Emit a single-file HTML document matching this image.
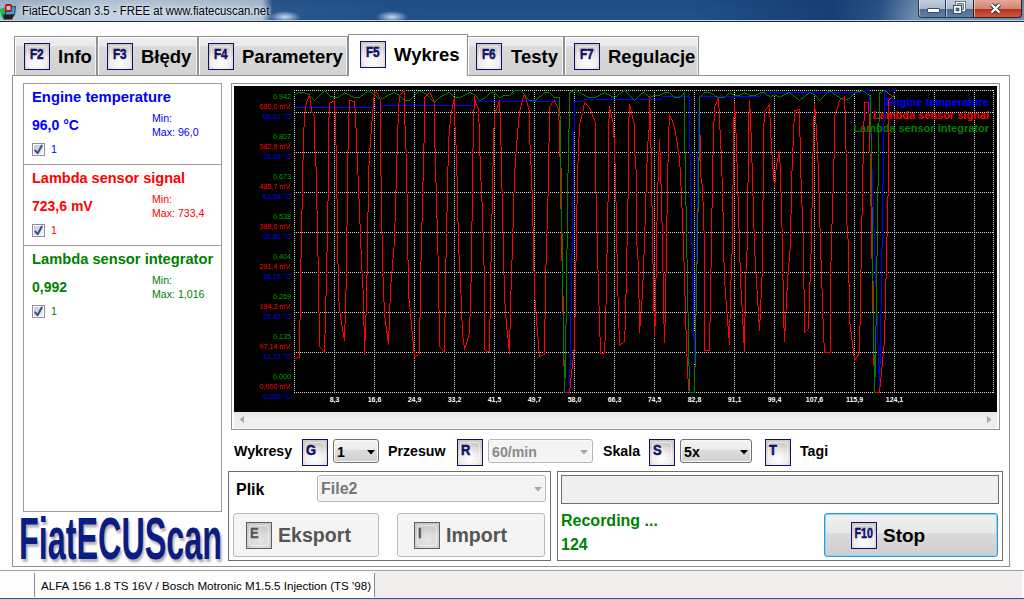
<!DOCTYPE html>
<html><head><meta charset="utf-8">
<style>
*{margin:0;padding:0;box-sizing:border-box}
html,body{width:1024px;height:600px;overflow:hidden;background:#fff;font-family:"Liberation Sans",sans-serif;position:relative}
.a{position:absolute}
#title{left:0;top:0;width:1024px;height:22px;background:radial-gradient(ellipse 16px 6px at 285px 17px,rgba(230,240,255,.85),rgba(230,240,255,0)),radial-gradient(ellipse 16px 6px at 392px 17px,rgba(230,240,255,.85),rgba(230,240,255,0)),linear-gradient(rgba(20,40,80,.12),rgba(255,255,255,0) 70%),linear-gradient(90deg,#aabcd2 0px,#c4d2e2 100px,#c0cedf 200px,#b4c6da 262px,#2a5890 272px,#1f5089 420px,#1f5089 700px,#173f76 830px,#2a5486 880px,#6e8db0 915px)}
#title .bl{left:0;top:20px;width:1024px;height:2px;background:linear-gradient(#c8d4e0 50%,#1c2b40 50%)}
#title .txt{left:21.5px;top:4.5px;font-size:12.3px;line-height:1;transform:scaleX(.923);transform-origin:0 0;color:#000;white-space:nowrap;text-shadow:0 0 6px #e8f0f8,0 0 3px #e8f0f8}
.tab{height:40px;border:1px solid #8f9294;background:linear-gradient(#f0f0f0 0%,#e8e8e8 24%,#dadada 26%,#d2d2d2 100%);box-shadow:inset 1px 1px 0 #fff,inset -1px 0 0 #f4f4f4}
.tab.sel{background:#fff;border-bottom:none;height:42px;z-index:2}
.tt{font-weight:bold;font-size:18.5px;color:#000;white-space:nowrap;line-height:1}
.key{border:1px solid #10106a;background:radial-gradient(ellipse 70% 60% at 50% 75%,#ffffff 0%,#f4f2f0 40%,#dedad6 80%,#cfcbc6 100%)}
.key:before{content:"";position:absolute;left:2px;top:2px;right:2px;bottom:2px;border-radius:3px;box-shadow:inset 0 0 1px 1px rgba(255,255,255,.6)}
.key span{position:absolute;left:-1.5px;right:0;text-align:center;top:3px;font-weight:bold;color:#10106a;line-height:1;transform:scaleX(.8);-webkit-text-stroke:0.5px #10106a}
.key.gray{border-color:#5e5e5e;background:radial-gradient(ellipse 70% 60% at 55% 70%,#e6e6e6 0%,#dadada 50%,#c8c8c8 100%)}
.key span.l1{text-align:left;left:3.3px;top:3px;transform-origin:0 0}
.key.gray span{color:#555;-webkit-text-stroke:0.3px #555}
.bx{border:1px solid #9a9ca0}
.sec{font-weight:bold;white-space:nowrap;line-height:1}
.mm{font-size:10.6px;white-space:nowrap;line-height:1}
.cb{width:13px;height:13px;border:1px solid #8e8f8f;background:#fff}.cb:before{content:"";position:absolute;left:1px;top:1px;width:9px;height:9px;background:linear-gradient(135deg,#c4cad8,#eef0f4)}
.lbl{font-weight:bold;font-size:14.2px;white-space:nowrap;line-height:1;color:#000}
.combo{border:1px solid #707070;border-radius:3px;background:linear-gradient(#f2f2f2 0%,#ebebeb 45%,#dddddd 47%,#d0d0d0 100%);box-shadow:inset 0 0 0 1px #fafafa}
.combo.dis{border-color:#b4b4b4;background:#f4f4f4}
.btn{border:1px solid #b8b8b8;border-radius:3px;background:#f4f4f4}

</style></head><body>
<div id="title" class="a">
  <div class="a bl"></div>
  <div class="a txt">FiatECUScan 3.5 - FREE at www.fiatecuscan.net</div>
  <svg class="a" style="left:0;top:2px" width="18" height="18" viewBox="0 0 18 18">
    <path d="M0,7 L6,5 L7,16 L4,18 L1,14 Z" fill="#1cb84a"/>
    <path d="M5.5,5 L15.5,4.5 L14.5,13 L5.5,13.5 Z" fill="#2aa8e8" stroke="#222" stroke-width="0.8"/>
    <path d="M3,12.5 L14.5,12.5 L12,17.5 L4,17.5 Z" fill="#241a1a"/>
    <rect x="5" y="2" width="7" height="8" rx="1.5" fill="#b01818"/>
    <rect x="6.5" y="4" width="4" height="4" fill="#e8b0b0"/>
  </svg>
  <div class="a" style="left:918px;top:0;width:28px;height:18px;border:1px solid #2a3a50;border-top:none;border-radius:0 0 0 4px;background:linear-gradient(#c2cfdd 0%,#a9bacd 50%,#4d6d92 52%,#5e7fa4 100%);box-shadow:inset 1px 0 0 rgba(255,255,255,.5)"></div>
  <div class="a" style="left:946px;top:0;width:27px;height:18px;border-bottom:1px solid #2a3a50;background:linear-gradient(#c2cfdd 0%,#a9bacd 50%,#4d6d92 52%,#5e7fa4 100%);box-shadow:inset 1px 0 0 rgba(255,255,255,.5)"></div>
  <div class="a" style="left:973px;top:0;width:49px;height:18px;border:1px solid #3a1a18;border-top:none;border-radius:0 0 4px 0;background:linear-gradient(#e0a89e 0%,#d58574 50%,#b7301c 52%,#c85a40 100%);box-shadow:inset 1px 0 0 rgba(255,255,255,.5)"></div>
  <div class="a" style="left:927px;top:8px;width:13px;height:5px;background:#fff;border:1px solid #3a4a60;border-radius:1px"></div>
  <svg class="a" style="left:952px;top:1px" width="14" height="14" viewBox="0 0 14 14">
    <rect x="4.5" y="1.5" width="8" height="8" fill="none" stroke="#3a4a60" stroke-width="3"/>
    <rect x="4.5" y="1.5" width="8" height="8" fill="none" stroke="#fff" stroke-width="1.5"/>
    <rect x="1.5" y="4.5" width="8" height="8" fill="#fff" stroke="#3a4a60" stroke-width="1"/>
    <rect x="4" y="7" width="3" height="3" fill="#4d6d92" stroke="#3a4a60" stroke-width="0.6"/>
  </svg>
  <svg class="a" style="left:989px;top:2px" width="13" height="13" viewBox="0 0 13 13">
    <path d="M2.5,2.5 L10.5,10.5 M10.5,2.5 L2.5,10.5" stroke="#3a2a2a" stroke-width="4.2"/>
    <path d="M2.5,2.5 L10.5,10.5 M10.5,2.5 L2.5,10.5" stroke="#fff" stroke-width="2.4"/>
  </svg>
</div>
<!-- tab page panel -->
<div class="a bx" style="left:12px;top:75px;width:998px;height:492px;border-color:#8d9196"></div>
<!-- tabs -->
<div class="a tab" style="left:14px;top:36px;width:83px"></div>
<div class="a tab" style="left:97px;top:36px;width:101px"></div>
<div class="a tab" style="left:198px;top:36px;width:150px"></div>
<div class="a tab sel" style="left:348px;top:34px;width:120px"></div>
<div class="a tab" style="left:467px;top:36px;width:97px"></div>
<div class="a tab" style="left:564px;top:36px;width:135px"></div>
<div class="a key" style="left:24px;top:43px;width:26px;height:27px"><span style="font-size:14px;transform:scaleX(0.84)">F2</span></div><div class="a tt" style="left:58px;top:48px">Info</div>
<div class="a key" style="left:107px;top:43px;width:26px;height:27px"><span style="font-size:14px;transform:scaleX(0.84)">F3</span></div><div class="a tt" style="left:141px;top:48px">Błędy</div>
<div class="a key" style="left:208px;top:43px;width:26px;height:27px"><span style="font-size:14px;transform:scaleX(0.84)">F4</span></div><div class="a tt" style="left:242px;top:48px">Parametery</div>
<div class="a" style="z-index:3"><div class="a key" style="left:360px;top:41px;width:26px;height:27px"><span style="font-size:14px;transform:scaleX(0.84)">F5</span></div><div class="a tt" style="left:394px;top:46px">Wykres</div></div>
<div class="a key" style="left:476px;top:43px;width:26px;height:27px"><span style="font-size:14px;transform:scaleX(0.84)">F6</span></div><div class="a tt" style="left:511px;top:48px">Testy</div>
<div class="a key" style="left:574px;top:43px;width:26px;height:27px"><span style="font-size:14px;transform:scaleX(0.84)">F7</span></div><div class="a tt" style="left:608px;top:48px">Regulacje</div>

<!-- info box -->
<div class="a bx" style="left:23px;top:83px;width:199px;height:429px"></div>
<div class="a" style="left:24px;top:164px;width:197px;height:1px;background:#a0a0a0"></div>
<div class="a" style="left:24px;top:245px;width:197px;height:1px;background:#a0a0a0"></div>

<div class="a sec" style="left:32px;top:90px;font-size:14.8px;color:#0000ff">Engine temperature</div>
<div class="a sec" style="left:32px;top:118px;font-size:14px;color:#0000ff">96,0 °C</div>
<div class="a mm" style="left:152px;top:113px;color:#0000ff">Min:</div>
<div class="a mm" style="left:152px;top:127px;color:#0000ff">Max: 96,0</div>
<div class="a cb" style="left:32px;top:143px"></div><svg class="a" style="left:32px;top:143px" width="13" height="13" viewBox="0 0 13 13"><path d="M3.2,7.4 L5.6,10.2 L9.8,2.6" fill="none" stroke="#3a4c94" stroke-width="2" stroke-linecap="round" stroke-linejoin="round"/></svg>
<div class="a mm" style="left:51px;top:144px;color:#0000ff">1</div>

<div class="a sec" style="left:32px;top:171px;font-size:14.5px;color:#ff0000">Lambda sensor signal</div>
<div class="a sec" style="left:32px;top:199px;font-size:14px;color:#ff0000">723,6 mV</div>
<div class="a mm" style="left:152px;top:194px;color:#ff0000">Min:</div>
<div class="a mm" style="left:152px;top:208px;color:#ff0000">Max: 733,4</div>
<div class="a cb" style="left:32px;top:224px"></div><svg class="a" style="left:32px;top:224px" width="13" height="13" viewBox="0 0 13 13"><path d="M3.2,7.4 L5.6,10.2 L9.8,2.6" fill="none" stroke="#3a4c94" stroke-width="2" stroke-linecap="round" stroke-linejoin="round"/></svg>
<div class="a mm" style="left:51px;top:225px;color:#ff0000">1</div>

<div class="a sec" style="left:32px;top:252px;font-size:14.7px;color:#008000">Lambda sensor integrator</div>
<div class="a sec" style="left:32px;top:280px;font-size:14px;color:#008000">0,992</div>
<div class="a mm" style="left:152px;top:275px;color:#008000">Min:</div>
<div class="a mm" style="left:152px;top:289px;color:#008000">Max: 1,016</div>
<div class="a cb" style="left:32px;top:305px"></div><svg class="a" style="left:32px;top:305px" width="13" height="13" viewBox="0 0 13 13"><path d="M3.2,7.4 L5.6,10.2 L9.8,2.6" fill="none" stroke="#3a4c94" stroke-width="2" stroke-linecap="round" stroke-linejoin="round"/></svg>
<div class="a mm" style="left:51px;top:306px;color:#008000">1</div>

<!-- logo -->
<div class="a" style="left:19px;top:509.5px;font-weight:bold;font-size:59px;color:#0b1c82;transform:scaleX(0.548);transform-origin:0 0;line-height:1;white-space:nowrap;text-shadow:3px 3px 3px rgba(0,0,0,.3)">FiatECUScan</div>

<svg class="a" style="left:0;top:0" width="1024" height="600" viewBox="0 0 1024 600">
<rect x="231.5" y="83.5" width="768" height="346" fill="#fff" stroke="#8e9196" stroke-width="1"/>
<rect x="234" y="86" width="763" height="326" fill="#000"/>
<rect x="234" y="412" width="763" height="16" fill="url(#sb)"/>
<path d="M244,416 L239.5,419.5 L244,423 Z" fill="#a8a8a8"/>
<path d="M987,416 L991.5,419.5 L987,423 Z" fill="#a8a8a8"/>
<path d="M294,90.5H994 M294,112.5H994 M294,152.5H994 M294,192.5H994 M294,232.5H994 M294,272.5H994 M294,312.5H994 M294,352.5H994 M294,392.5H994 M294.5,90V393 M334.5,90V393 M374.5,90V393 M414.5,90V393 M454.5,90V393 M494.5,90V393 M534.5,90V393 M574.5,90V393 M614.5,90V393 M654.5,90V393 M694.5,90V393 M734.5,90V393 M774.5,90V393 M814.5,90V393 M854.5,90V393 M894.5,90V393 M934.5,90V393 M974.5,90V393 M993.5,90V393" stroke="#d8d8d8" stroke-width="1" stroke-dasharray="1,1" fill="none" shape-rendering="crispEdges"/>
<g font-size="7.2" text-anchor="end" font-family="Liberation Sans">
<text x="291" y="379.0" fill="#00a000">0,000</text>
<text x="290" y="389.0" fill="#ff0000">0,000 mV</text>
<text x="291" y="399.3" fill="#0000ff">0,000 °C</text>
<text x="291" y="339.0" fill="#00a000">0,135</text>
<text x="290" y="349.0" fill="#ff0000">97,14 mV</text>
<text x="291" y="359.3" fill="#0000ff">12,72 °C</text>
<text x="291" y="299.0" fill="#00a000">0,269</text>
<text x="290" y="309.0" fill="#ff0000">194,3 mV</text>
<text x="291" y="319.3" fill="#0000ff">25,43 °C</text>
<text x="291" y="259.0" fill="#00a000">0,404</text>
<text x="290" y="269.0" fill="#ff0000">291,4 mV</text>
<text x="291" y="279.3" fill="#0000ff">38,15 °C</text>
<text x="291" y="219.0" fill="#00a000">0,538</text>
<text x="290" y="229.0" fill="#ff0000">388,6 mV</text>
<text x="291" y="239.3" fill="#0000ff">50,86 °C</text>
<text x="291" y="179.0" fill="#00a000">0,673</text>
<text x="290" y="189.0" fill="#ff0000">485,7 mV</text>
<text x="291" y="199.3" fill="#0000ff">63,58 °C</text>
<text x="291" y="139.0" fill="#00a000">0,807</text>
<text x="290" y="149.0" fill="#ff0000">582,8 mV</text>
<text x="291" y="159.3" fill="#0000ff">76,29 °C</text>
<text x="291" y="99.0" fill="#00a000">0,942</text>
<text x="290" y="109.0" fill="#ff0000">680,0 mV</text>
<text x="291" y="119.3" fill="#0000ff">89,01 °C</text>
</g>
<g font-size="7" font-weight="bold" text-anchor="middle" fill="#fff" font-family="Liberation Sans">
<text x="334.5" y="402.3">8,3</text>
<text x="374.5" y="402.3">16,6</text>
<text x="414.5" y="402.3">24,9</text>
<text x="454.5" y="402.3">33,2</text>
<text x="494.5" y="402.3">41,5</text>
<text x="534.5" y="402.3">49,7</text>
<text x="574.5" y="402.3">58,0</text>
<text x="614.5" y="402.3">66,3</text>
<text x="654.5" y="402.3">74,5</text>
<text x="694.5" y="402.3">82,8</text>
<text x="734.5" y="402.3">91,1</text>
<text x="774.5" y="402.3">99,4</text>
<text x="814.5" y="402.3">107,6</text>
<text x="854.5" y="402.3">115,9</text>
<text x="894.5" y="402.3">124,1</text>
</g>
<g font-size="11" font-weight="bold" text-anchor="end" font-family="Liberation Sans"><text x="989" y="105.5" fill="#0000ff">Engine temperature</text><text x="989" y="118.5" fill="#ff0000">Lambda sensor signal</text><text x="989" y="131.5" fill="#008000">Lambda sensor integrator</text></g>
<path fill="#0000ff" shape-rendering="crispEdges" d="M294 107h1v1h-1zM295 107h1v1h-1zM296 107h1v1h-1zM297 107h1v1h-1zM298 107h1v1h-1zM299 107h1v1h-1zM300 107h1v1h-1zM301 107h1v1h-1zM302 107h1v1h-1zM303 107h1v1h-1zM304 107h1v1h-1zM306 107h1v1h-1zM307 107h1v1h-1zM308 107h1v1h-1zM309 107h1v1h-1zM310 107h1v1h-1zM312 107h1v1h-1zM313 107h1v1h-1zM314 107h1v1h-1zM315 107h1v1h-1zM316 107h1v1h-1zM317 107h1v1h-1zM318 107h1v1h-1zM319 107h1v1h-1zM320 107h1v1h-1zM321 107h1v1h-1zM322 107h1v1h-1zM323 107h1v1h-1zM324 107h1v1h-1zM325 107h1v1h-1zM326 107h1v1h-1zM327 107h1v1h-1zM328 107h1v1h-1zM330 107h1v1h-1zM331 107h1v1h-1zM332 107h1v1h-1zM333 107h1v1h-1zM335 107h1v1h-1zM336 107h1v1h-1zM337 107h1v1h-1zM338 107h1v1h-1zM339 107h1v1h-1zM340 107h1v1h-1zM341 107h1v1h-1zM342 107h1v1h-1zM343 107h1v1h-1zM344 107h1v1h-1zM345 107h1v1h-1zM346 107h1v1h-1zM347 107h1v1h-1zM348 107h1v1h-1zM350 107h1v1h-1zM351 107h1v1h-1zM352 107h1v1h-1zM353 107h1v1h-1zM355 107h1v1h-1zM356 107h1v1h-1zM357 107h1v1h-1zM358 107h1v1h-1zM359 107h1v1h-1zM360 107h1v1h-1zM361 107h1v1h-1zM362 107h1v1h-1zM363 107h1v1h-1zM364 107h1v1h-1zM365 107h1v1h-1zM366 107h1v1h-1zM367 107h1v1h-1zM368 107h1v1h-1zM369 107h1v1h-1zM370 107h1v1h-1zM371 107h1v1h-1zM372 106h1v1h-1zM374 105h1v1h-1zM375 106h1v1h-1zM376 106h1v1h-1zM377 107h1v1h-1zM378 107h1v1h-1zM379 108h1v1h-1zM381 106h1v1h-1zM382 106h1v1h-1zM383 105h1v1h-1zM384 105h1v1h-1zM385 105h1v1h-1zM386 105h1v1h-1zM387 105h1v1h-1zM388 105h1v1h-1zM389 105h1v1h-1zM390 105h1v1h-1zM391 105h1v1h-1zM392 105h1v1h-1zM393 105h1v1h-1zM394 105h1v1h-1zM395 105h1v1h-1zM396 105h1v1h-1zM397 105h1v1h-1zM399 105h1v1h-1zM400 105h1v1h-1zM401 105h1v1h-1zM402 105h1v1h-1zM403 105h1v1h-1zM405 105h1v1h-1zM406 105h1v1h-1zM407 105h1v1h-1zM408 105h1v1h-1zM409 105h1v1h-1zM410 105h1v1h-1zM411 105h1v1h-1zM412 105h1v1h-1zM413 105h1v1h-1zM414 105h1v1h-1zM415 105h1v1h-1zM416 105h1v1h-1zM417 105h1v1h-1zM418 105h1v1h-1zM419 105h1v1h-1zM420 105h1v1h-1zM421 105h1v1h-1zM422 105h1v1h-1zM423 105h1v1h-1zM425 105h1v1h-1zM426 105h1v1h-1zM427 105h1v1h-1zM428 105h1v1h-1zM429 105h1v1h-1zM430 105h1v1h-1zM431 105h1v1h-1zM432 105h1v1h-1zM433 105h1v1h-1zM435 105h1v1h-1zM436 105h1v1h-1zM437 105h1v1h-1zM438 105h1v1h-1zM439 105h1v1h-1zM440 105h1v1h-1zM441 105h1v1h-1zM442 105h1v1h-1zM443 105h1v1h-1zM444 105h1v1h-1zM445 105h1v1h-1zM446 105h1v1h-1zM447 105h1v1h-1zM448 105h1v1h-1zM449 105h1v1h-1zM450 105h1v1h-1zM451 105h1v1h-1zM453 105h1v1h-1zM455 105h1v1h-1zM456 105h1v1h-1zM457 105h1v1h-1zM458 105h1v1h-1zM459 105h1v1h-1zM460 105h1v1h-1zM461 105h1v1h-1zM462 105h1v1h-1zM463 105h1v1h-1zM464 105h1v1h-1zM465 105h1v1h-1zM466 105h1v1h-1zM467 105h1v1h-1zM468 105h1v1h-1zM469 105h1v1h-1zM470 105h1v1h-1zM471 105h1v1h-1zM472 105h1v1h-1zM473 105h1v1h-1zM475 104h1v1h-1zM476 103h1v1h-1zM477 102h1v1h-1zM478 101h1v1h-1zM479 101h1v1h-1zM480 101h1v1h-1zM481 101h1v1h-1zM482 101h1v1h-1zM483 101h1v1h-1zM484 101h1v1h-1zM485 101h1v1h-1zM486 101h1v1h-1zM487 101h1v1h-1zM488 101h1v1h-1zM489 101h1v1h-1zM490 101h1v1h-1zM491 101h1v1h-1zM492 101h1v1h-1zM493 101h1v1h-1zM494 101h1v1h-1zM495 101h1v1h-1zM496 101h1v1h-1zM497 101h1v1h-1zM498 101h1v1h-1zM500 101h1v1h-1zM501 101h1v1h-1zM502 101h1v1h-1zM503 101h1v1h-1zM504 101h1v1h-1zM505 101h1v1h-1zM506 101h1v1h-1zM507 101h1v1h-1zM508 101h1v1h-1zM509 101h1v1h-1zM510 101h1v1h-1zM511 101h1v1h-1zM512 101h1v1h-1zM513 101h1v1h-1zM514 101h1v1h-1zM515 101h1v1h-1zM516 101h1v1h-1zM517 101h1v1h-1zM518 101h1v1h-1zM519 101h1v1h-1zM520 101h1v1h-1zM521 101h1v1h-1zM523 101h1v1h-1zM524 101h1v1h-1zM525 101h1v1h-1zM527 101h1v1h-1zM528 101h1v1h-1zM529 101h1v1h-1zM530 101h1v1h-1zM531 101h1v1h-1zM532 101h1v1h-1zM533 101h1v1h-1zM534 101h1v1h-1zM535 101h1v1h-1zM536 101h1v1h-1zM537 101h1v1h-1zM538 101h1v1h-1zM539 101h1v1h-1zM540 101h1v1h-1zM541 101h1v1h-1zM542 101h1v1h-1zM543 101h1v1h-1zM544 101h1v1h-1zM545 101h1v1h-1zM546 101h1v1h-1zM547 101h1v1h-1zM548 101h1v1h-1zM549 101h1v1h-1zM550 101h1v1h-1zM551 101h1v1h-1zM552 101h1v1h-1zM555 101h1v1h-1zM556 101h1v1h-1zM557 101h1v1h-1zM558 101h1v1h-1zM559 116h1v2h-1zM565 391h1v1h-1zM566 390h1v1h-1zM567 390h1v1h-1zM568 389h1v1h-1zM569 367h1v21h-1zM570 315h1v52h-1zM571 254h1v61h-1zM572 193h1v61h-1zM573 132h1v61h-1zM574 101h1v31h-1zM575 101h1v1h-1zM576 101h1v1h-1zM577 101h1v1h-1zM578 101h1v1h-1zM579 101h1v1h-1zM580 101h1v1h-1zM581 101h1v1h-1zM582 100h1v1h-1zM583 100h1v1h-1zM584 99h1v1h-1zM585 99h1v1h-1zM586 99h1v1h-1zM587 99h1v1h-1zM588 99h1v1h-1zM589 99h1v1h-1zM590 99h1v1h-1zM591 99h1v1h-1zM592 99h1v1h-1zM593 99h1v1h-1zM594 99h1v1h-1zM595 99h1v1h-1zM596 99h1v1h-1zM597 99h1v1h-1zM598 99h1v1h-1zM599 99h1v1h-1zM600 99h1v1h-1zM601 99h1v1h-1zM602 99h1v1h-1zM603 99h1v1h-1zM604 99h1v1h-1zM605 99h1v1h-1zM606 99h1v1h-1zM607 99h1v1h-1zM608 99h1v1h-1zM609 99h1v1h-1zM610 99h1v1h-1zM611 99h1v1h-1zM612 99h1v1h-1zM613 99h1v1h-1zM614 99h1v1h-1zM615 99h1v1h-1zM616 99h1v1h-1zM617 99h1v1h-1zM618 99h1v1h-1zM619 99h1v1h-1zM620 99h1v1h-1zM621 99h1v1h-1zM622 99h1v1h-1zM623 99h1v1h-1zM624 99h1v1h-1zM625 99h1v1h-1zM626 99h1v1h-1zM627 99h1v1h-1zM628 99h1v1h-1zM629 99h1v1h-1zM630 99h1v1h-1zM631 99h1v1h-1zM632 99h1v1h-1zM634 99h1v1h-1zM636 99h1v1h-1zM637 99h1v1h-1zM638 99h1v1h-1zM639 99h1v1h-1zM640 99h1v1h-1zM641 99h1v1h-1zM642 99h1v1h-1zM643 99h1v1h-1zM644 99h1v1h-1zM645 99h1v1h-1zM646 99h1v1h-1zM647 99h1v1h-1zM648 99h1v1h-1zM650 99h1v1h-1zM651 99h1v1h-1zM652 99h1v1h-1zM653 99h1v1h-1zM654 99h1v1h-1zM655 99h1v1h-1zM656 99h1v1h-1zM657 99h1v1h-1zM658 99h1v1h-1zM659 99h1v1h-1zM660 99h1v1h-1zM661 98h1v1h-1zM662 97h1v1h-1zM663 96h1v1h-1zM664 96h1v1h-1zM665 96h1v1h-1zM666 96h1v1h-1zM667 96h1v1h-1zM668 96h1v1h-1zM669 96h1v1h-1zM670 96h1v1h-1zM671 96h1v1h-1zM672 96h1v1h-1zM674 96h1v1h-1zM675 96h1v1h-1zM676 96h1v1h-1zM677 96h1v1h-1zM678 96h1v1h-1zM679 96h1v1h-1zM681 96h1v1h-1zM682 96h1v1h-1zM683 96h1v1h-1zM685 96h1v1h-1zM686 96h1v1h-1zM687 96h1v1h-1zM688 96h1v1h-1zM689 96h1v53h-1zM690 149h1v48h-1zM691 197h1v47h-1zM692 244h1v47h-1zM693 291h1v48h-1zM694 332h1v31h-1zM695 272h1v42h-1zM696 212h1v50h-1zM697 152h1v57h-1zM698 109h1v43h-1zM699 96h1v1h-1zM701 96h1v1h-1zM702 96h1v1h-1zM703 96h1v1h-1zM704 96h1v1h-1zM705 96h1v1h-1zM706 96h1v1h-1zM707 96h1v1h-1zM708 96h1v1h-1zM709 96h1v1h-1zM710 96h1v1h-1zM711 96h1v1h-1zM712 96h1v1h-1zM713 96h1v1h-1zM714 96h1v1h-1zM717 96h1v1h-1zM718 96h1v1h-1zM719 96h1v1h-1zM720 96h1v1h-1zM721 96h1v1h-1zM722 96h1v1h-1zM723 96h1v1h-1zM724 96h1v1h-1zM726 96h1v1h-1zM727 96h1v1h-1zM728 96h1v1h-1zM729 96h1v1h-1zM730 96h1v1h-1zM731 96h1v1h-1zM732 96h1v1h-1zM733 96h1v1h-1zM734 96h1v1h-1zM735 96h1v1h-1zM736 96h1v1h-1zM737 96h1v1h-1zM738 96h1v1h-1zM739 96h1v1h-1zM740 96h1v1h-1zM741 96h1v1h-1zM742 96h1v1h-1zM743 96h1v1h-1zM744 96h1v1h-1zM745 96h1v1h-1zM746 96h1v1h-1zM747 96h1v1h-1zM748 96h1v1h-1zM749 96h1v1h-1zM750 96h1v1h-1zM751 96h1v1h-1zM752 96h1v1h-1zM753 96h1v1h-1zM754 96h1v1h-1zM755 96h1v1h-1zM756 96h1v1h-1zM757 96h1v1h-1zM758 96h1v1h-1zM759 96h1v1h-1zM760 95h1v1h-1zM761 94h1v1h-1zM762 93h1v1h-1zM765 92h1v1h-1zM766 92h1v1h-1zM767 92h1v1h-1zM768 92h1v1h-1zM769 92h1v1h-1zM770 92h1v1h-1zM771 92h1v1h-1zM772 92h1v1h-1zM773 92h1v1h-1zM774 92h1v1h-1zM775 92h1v1h-1zM776 92h1v1h-1zM777 92h1v1h-1zM778 92h1v1h-1zM779 92h1v1h-1zM780 92h1v1h-1zM781 92h1v1h-1zM782 92h1v1h-1zM783 92h1v1h-1zM784 92h1v1h-1zM785 92h1v1h-1zM786 92h1v1h-1zM787 92h1v1h-1zM790 92h1v1h-1zM791 92h1v1h-1zM792 92h1v1h-1zM793 92h1v1h-1zM794 92h1v1h-1zM795 92h1v1h-1zM796 92h1v1h-1zM797 92h1v1h-1zM798 92h1v1h-1zM799 92h1v1h-1zM800 92h1v1h-1zM801 92h1v1h-1zM802 92h1v1h-1zM803 92h1v1h-1zM804 92h1v1h-1zM805 92h1v1h-1zM806 92h1v1h-1zM807 92h1v1h-1zM808 92h1v1h-1zM811 92h1v1h-1zM812 92h1v1h-1zM813 92h1v1h-1zM814 92h1v1h-1zM815 92h1v1h-1zM816 92h1v1h-1zM817 92h1v1h-1zM818 92h1v1h-1zM819 92h1v1h-1zM820 92h1v1h-1zM821 92h1v1h-1zM822 92h1v1h-1zM823 92h1v1h-1zM824 92h1v1h-1zM825 92h1v1h-1zM826 92h1v1h-1zM828 92h1v1h-1zM829 92h1v1h-1zM830 92h1v1h-1zM831 92h1v1h-1zM833 92h1v1h-1zM834 92h1v1h-1zM835 92h1v1h-1zM836 92h1v1h-1zM837 92h1v1h-1zM838 92h1v1h-1zM839 92h1v1h-1zM840 92h1v1h-1zM841 92h1v1h-1zM842 92h1v1h-1zM843 92h1v1h-1zM844 92h1v1h-1zM845 92h1v1h-1zM846 92h1v1h-1zM847 92h1v1h-1zM848 92h1v1h-1zM849 92h1v1h-1zM850 92h1v1h-1zM851 92h1v1h-1zM852 92h1v1h-1zM853 92h1v1h-1zM854 92h1v1h-1zM857 92h1v1h-1zM858 92h1v1h-1zM859 92h1v1h-1zM860 92h1v1h-1zM861 91h1v1h-1zM863 90h1v1h-1zM864 90h1v1h-1zM865 90h1v1h-1zM866 90h1v1h-1zM867 90h1v1h-1zM868 90h1v1h-1zM869 90h1v5h-1zM869 96h1v14h-1zM870 133h1v7h-1zM872 169h1v30h-1zM873 199h1v29h-1zM874 228h1v29h-1zM875 257h1v29h-1zM877 315h1v30h-1zM878 345h1v29h-1zM879 365h1v22h-1zM880 309h1v56h-1zM881 247h1v62h-1zM882 184h1v63h-1zM883 122h1v62h-1zM884 91h1v31h-1zM885 90h1v1h-1zM886 90h1v1h-1zM887 90h1v1h-1zM888 90h1v1h-1zM889 90h1v1h-1zM890 90h1v1h-1zM891 90h1v1h-1zM892 90h1v1h-1zM893 90h1v1h-1zM894 90h1v1h-1zM895 90h1v1h-1z"/>
<path fill="#ff0000" shape-rendering="crispEdges" d="M294 358h1v1h-1zM295 358h1v1h-1zM296 358h1v1h-1zM297 357h1v1h-1zM298 357h1v1h-1zM299 320h1v38h-1zM300 258h1v62h-1zM301 210h1v48h-1zM302 160h1v50h-1zM303 127h1v33h-1zM304 113h1v14h-1zM305 105h1v8h-1zM306 101h1v4h-1zM307 99h1v2h-1zM308 96h1v3h-1zM309 94h1v1h-1zM309 96h1v2h-1zM310 98h1v8h-1zM311 106h1v6h-1zM312 112h1v2h-1zM313 114h1v2h-1zM314 116h1v35h-1zM315 151h1v16h-1zM316 167h1v43h-1zM317 210h1v47h-1zM318 257h1v56h-1zM319 313h1v34h-1zM320 347h1v1h-1zM321 348h1v1h-1zM322 349h1v2h-1zM323 351h1v1h-1zM324 334h1v19h-1zM325 296h1v38h-1zM326 252h1v44h-1zM327 201h1v51h-1zM328 117h1v84h-1zM329 103h1v14h-1zM330 102h1v1h-1zM331 102h1v1h-1zM332 101h1v1h-1zM333 101h1v1h-1zM334 100h1v12h-1zM335 112h1v33h-1zM336 145h1v54h-1zM337 199h1v65h-1zM338 264h1v38h-1zM339 302h1v10h-1zM340 312h1v8h-1zM341 320h1v6h-1zM342 326h1v6h-1zM343 332h1v6h-1zM344 324h1v17h-1zM345 291h1v33h-1zM346 225h1v66h-1zM347 150h1v75h-1zM348 113h1v37h-1zM349 100h1v13h-1zM350 100h1v1h-1zM351 100h1v1h-1zM352 101h1v1h-1zM353 101h1v1h-1zM354 101h1v7h-1zM355 108h1v20h-1zM356 128h1v24h-1zM357 152h1v23h-1zM358 175h1v24h-1zM359 199h1v25h-1zM360 224h1v25h-1zM361 249h1v22h-1zM362 271h1v18h-1zM363 289h1v37h-1zM364 326h1v29h-1zM365 315h1v26h-1zM366 275h1v40h-1zM367 212h1v63h-1zM368 165h1v47h-1zM369 148h1v17h-1zM370 134h1v14h-1zM371 121h1v13h-1zM372 109h1v12h-1zM373 97h1v12h-1zM374 91h1v4h-1zM374 96h1v1h-1zM375 92h1v1h-1zM376 92h1v1h-1zM377 93h1v2h-1zM378 95h1v2h-1zM379 97h1v1h-1zM380 100h1v76h-1zM381 176h1v59h-1zM382 235h1v42h-1zM383 277h1v25h-1zM384 302h1v16h-1zM385 318h1v8h-1zM386 326h1v7h-1zM387 333h1v8h-1zM388 331h1v14h-1zM389 303h1v28h-1zM390 283h1v20h-1zM391 271h1v12h-1zM392 259h1v12h-1zM393 247h1v12h-1zM394 223h1v24h-1zM395 189h1v34h-1zM396 155h1v34h-1zM397 124h1v31h-1zM398 103h1v21h-1zM399 96h1v7h-1zM400 94h1v1h-1zM401 93h1v1h-1zM402 92h1v1h-1zM403 91h1v1h-1zM404 90h1v10h-1zM404 101h1v24h-1zM405 125h1v24h-1zM406 149h1v45h-1zM407 194h1v66h-1zM408 260h1v39h-1zM409 299h1v10h-1zM410 309h1v11h-1zM411 320h1v11h-1zM412 331h1v10h-1zM413 341h1v11h-1zM414 352h1v6h-1zM415 356h1v1h-1zM416 355h1v1h-1zM417 355h1v1h-1zM418 354h1v1h-1zM419 317h1v37h-1zM420 261h1v56h-1zM421 222h1v39h-1zM422 182h1v40h-1zM423 143h1v39h-1zM424 97h1v46h-1zM425 96h1v1h-1zM426 95h1v1h-1zM427 94h1v1h-1zM428 93h1v1h-1zM429 92h1v1h-1zM430 93h1v2h-1zM431 95h1v2h-1zM432 97h1v2h-1zM433 99h1v2h-1zM434 101h1v1h-1zM434 103h1v45h-1zM435 148h1v35h-1zM436 183h1v36h-1zM437 219h1v36h-1zM438 255h1v54h-1zM439 309h1v38h-1zM440 347h1v1h-1zM441 348h1v1h-1zM442 349h1v2h-1zM443 351h1v1h-1zM444 317h1v36h-1zM445 258h1v59h-1zM446 212h1v46h-1zM447 166h1v46h-1zM448 136h1v30h-1zM449 124h1v12h-1zM450 115h1v9h-1zM451 109h1v6h-1zM452 104h1v5h-1zM453 100h1v4h-1zM454 98h1v29h-1zM455 127h1v18h-1zM456 145h1v31h-1zM457 176h1v46h-1zM458 222h1v33h-1zM459 255h1v18h-1zM460 273h1v22h-1zM461 295h1v26h-1zM462 321h1v16h-1zM463 337h1v8h-1zM464 345h1v5h-1zM465 345h1v3h-1zM466 342h1v3h-1zM467 338h1v4h-1zM468 335h1v3h-1zM469 317h1v18h-1zM470 283h1v34h-1zM471 221h1v62h-1zM472 148h1v73h-1zM473 109h1v39h-1zM474 96h1v13h-1zM475 100h1v4h-1zM476 104h1v2h-1zM477 106h1v2h-1zM478 108h1v15h-1zM479 123h1v33h-1zM480 156h1v25h-1zM481 181h1v21h-1zM482 202h1v31h-1zM483 233h1v32h-1zM484 265h1v85h-1zM485 350h1v1h-1zM486 350h1v1h-1zM487 351h1v1h-1zM488 351h1v1h-1zM489 319h1v34h-1zM490 262h1v57h-1zM491 214h1v48h-1zM492 166h1v48h-1zM493 128h1v38h-1zM494 113h1v15h-1zM495 110h1v3h-1zM496 108h1v2h-1zM497 105h1v3h-1zM498 102h1v3h-1zM499 100h1v13h-1zM500 113h1v33h-1zM501 146h1v43h-1zM502 189h1v43h-1zM503 232h1v43h-1zM504 275h1v29h-1zM505 304h1v14h-1zM506 318h1v12h-1zM507 330h1v9h-1zM508 339h1v10h-1zM509 329h1v25h-1zM510 290h1v39h-1zM511 260h1v30h-1zM512 228h1v32h-1zM513 193h1v35h-1zM514 168h1v25h-1zM515 154h1v14h-1zM516 140h1v14h-1zM517 128h1v12h-1zM518 117h1v11h-1zM519 110h1v7h-1zM520 106h1v4h-1zM521 102h1v4h-1zM522 98h1v4h-1zM523 95h1v3h-1zM524 95h1v1h-1zM525 97h1v2h-1zM526 99h1v3h-1zM527 102h1v4h-1zM528 106h1v4h-1zM529 110h1v35h-1zM530 145h1v20h-1zM531 165h1v25h-1zM532 190h1v37h-1zM533 227h1v44h-1zM534 271h1v29h-1zM535 300h1v13h-1zM536 313h1v14h-1zM537 327h1v12h-1zM538 339h1v12h-1zM539 351h1v6h-1zM540 356h1v1h-1zM541 355h1v1h-1zM542 355h1v1h-1zM543 354h1v1h-1zM544 319h1v36h-1zM545 265h1v54h-1zM546 231h1v34h-1zM547 196h1v35h-1zM548 143h1v53h-1zM549 106h1v37h-1zM550 105h1v1h-1zM551 103h1v2h-1zM552 102h1v1h-1zM553 101h1v1h-1zM554 100h1v2h-1zM555 102h1v2h-1zM556 104h1v2h-1zM557 106h1v2h-1zM558 108h1v12h-1zM559 120h1v37h-1zM560 168h1v41h-1zM561 232h1v29h-1zM562 296h1v18h-1zM563 360h1v6h-1zM565 392h1v1h-1zM566 392h1v1h-1zM567 392h1v1h-1zM568 392h1v1h-1zM569 388h1v5h-1zM570 378h1v10h-1zM571 369h1v9h-1zM572 360h1v9h-1zM573 350h1v10h-1zM574 317h1v33h-1zM575 261h1v56h-1zM576 204h1v57h-1zM577 163h1v41h-1zM578 137h1v26h-1zM579 123h1v14h-1zM580 119h1v4h-1zM581 115h1v4h-1zM582 111h1v4h-1zM583 105h1v6h-1zM584 102h1v3h-1zM585 103h1v1h-1zM586 104h1v1h-1zM587 105h1v1h-1zM588 106h1v1h-1zM589 107h1v2h-1zM590 109h1v2h-1zM591 111h1v3h-1zM592 114h1v3h-1zM593 117h1v2h-1zM594 119h1v2h-1zM595 121h1v73h-1zM596 194h1v38h-1zM597 232h1v38h-1zM598 270h1v35h-1zM599 305h1v32h-1zM600 337h1v17h-1zM601 353h1v1h-1zM602 353h1v1h-1zM603 353h1v1h-1zM604 341h1v13h-1zM605 305h1v36h-1zM606 254h1v51h-1zM607 202h1v52h-1zM608 119h1v83h-1zM609 106h1v13h-1zM610 109h1v5h-1zM611 114h1v4h-1zM612 118h1v4h-1zM613 122h1v16h-1zM614 138h1v25h-1zM615 163h1v39h-1zM616 202h1v52h-1zM617 254h1v43h-1zM618 297h1v32h-1zM619 329h1v17h-1zM620 344h1v1h-1zM621 343h1v1h-1zM622 343h1v1h-1zM623 342h1v1h-1zM624 330h1v12h-1zM625 294h1v36h-1zM626 247h1v47h-1zM627 199h1v48h-1zM628 117h1v82h-1zM629 104h1v13h-1zM630 106h1v4h-1zM631 110h1v5h-1zM632 115h1v4h-1zM633 119h1v4h-1zM634 123h1v33h-1zM635 156h1v13h-1zM636 169h1v78h-1zM637 247h1v13h-1zM638 260h1v39h-1zM639 299h1v34h-1zM640 313h1v13h-1zM641 300h1v13h-1zM642 280h1v20h-1zM643 254h1v26h-1zM644 225h1v29h-1zM645 194h1v31h-1zM646 163h1v31h-1zM647 141h1v22h-1zM648 130h1v11h-1zM649 96h1v1h-1zM649 98h1v32h-1zM650 110h1v38h-1zM651 148h1v58h-1zM652 206h1v58h-1zM653 264h1v48h-1zM654 312h1v25h-1zM655 278h1v48h-1zM656 221h1v57h-1zM657 182h1v39h-1zM658 151h1v31h-1zM659 139h1v13h-1zM660 152h1v32h-1zM661 184h1v38h-1zM662 222h1v51h-1zM663 273h1v51h-1zM664 324h1v19h-1zM665 274h1v51h-1zM666 215h1v59h-1zM667 163h1v52h-1zM668 126h1v37h-1zM669 114h1v12h-1zM670 116h1v2h-1zM671 118h1v2h-1zM672 120h1v3h-1zM673 123h1v3h-1zM674 126h1v4h-1zM675 130h1v6h-1zM676 136h1v6h-1zM677 142h1v7h-1zM678 149h1v6h-1zM679 155h1v12h-1zM680 167h1v19h-1zM681 186h1v22h-1zM682 208h1v24h-1zM683 232h1v30h-1zM684 262h1v34h-1zM685 296h1v34h-1zM686 330h1v27h-1zM687 357h1v22h-1zM688 379h1v12h-1zM694 366h1v1h-1zM695 314h1v1h-1zM696 262h1v2h-1zM697 209h1v3h-1zM698 157h1v4h-1zM700 135h1v43h-1zM701 178h1v6h-1zM702 184h1v17h-1zM703 201h1v30h-1zM704 231h1v120h-1zM705 350h1v1h-1zM706 350h1v1h-1zM707 350h1v1h-1zM708 350h1v1h-1zM709 323h1v28h-1zM710 268h1v55h-1zM711 208h1v60h-1zM712 155h1v53h-1zM713 121h1v34h-1zM714 106h1v15h-1zM715 104h1v2h-1zM716 101h1v3h-1zM717 99h1v2h-1zM718 98h1v10h-1zM719 108h1v22h-1zM720 130h1v20h-1zM721 150h1v27h-1zM722 177h1v35h-1zM723 212h1v51h-1zM724 263h1v24h-1zM725 287h1v13h-1zM726 300h1v14h-1zM727 314h1v12h-1zM728 326h1v12h-1zM729 319h1v26h-1zM730 280h1v39h-1zM731 254h1v26h-1zM732 185h1v69h-1zM733 117h1v68h-1zM734 103h1v14h-1zM735 112h1v21h-1zM736 133h1v30h-1zM737 163h1v33h-1zM738 196h1v33h-1zM739 229h1v34h-1zM740 263h1v26h-1zM741 289h1v18h-1zM742 307h1v18h-1zM743 325h1v18h-1zM744 317h1v36h-1zM745 271h1v46h-1zM746 251h1v20h-1zM747 183h1v68h-1zM748 113h1v70h-1zM749 100h1v13h-1zM750 109h1v23h-1zM751 132h1v31h-1zM752 163h1v33h-1zM753 196h1v33h-1zM754 229h1v27h-1zM755 256h1v18h-1zM756 274h1v16h-1zM757 290h1v16h-1zM758 306h1v16h-1zM759 320h1v11h-1zM760 299h1v21h-1zM761 277h1v22h-1zM762 200h1v77h-1zM763 123h1v77h-1zM764 111h1v12h-1zM765 109h1v2h-1zM766 108h1v1h-1zM767 107h1v1h-1zM768 105h1v2h-1zM769 104h1v13h-1zM770 117h1v21h-1zM771 138h1v17h-1zM772 155h1v14h-1zM773 169h1v12h-1zM774 181h1v7h-1zM775 170h1v12h-1zM776 162h1v8h-1zM777 158h1v4h-1zM778 154h1v4h-1zM779 151h1v12h-1zM780 163h1v30h-1zM781 193h1v35h-1zM782 228h1v52h-1zM783 280h1v48h-1zM784 328h1v14h-1zM785 311h1v20h-1zM786 291h1v20h-1zM787 275h1v16h-1zM788 263h1v12h-1zM789 251h1v12h-1zM790 215h1v36h-1zM791 171h1v44h-1zM792 147h1v24h-1zM793 123h1v24h-1zM794 110h1v13h-1zM795 110h1v1h-1zM796 110h1v1h-1zM797 109h1v1h-1zM798 109h1v1h-1zM799 109h1v28h-1zM800 137h1v42h-1zM801 179h1v26h-1zM802 205h1v27h-1zM803 232h1v57h-1zM804 289h1v44h-1zM805 331h1v1h-1zM806 330h1v1h-1zM807 329h1v1h-1zM808 313h1v16h-1zM809 282h1v31h-1zM810 254h1v28h-1zM811 208h1v46h-1zM812 152h1v56h-1zM813 116h1v36h-1zM814 103h1v13h-1zM815 109h1v15h-1zM816 124h1v18h-1zM817 142h1v21h-1zM818 163h1v30h-1zM819 193h1v35h-1zM820 228h1v32h-1zM821 260h1v29h-1zM822 289h1v30h-1zM823 319h1v24h-1zM824 343h1v10h-1zM825 352h1v1h-1zM826 352h1v1h-1zM827 352h1v1h-1zM828 352h1v1h-1zM829 352h1v1h-1zM830 261h1v92h-1zM831 224h1v37h-1zM832 192h1v32h-1zM833 159h1v33h-1zM834 115h1v44h-1zM835 112h1v3h-1zM836 109h1v3h-1zM837 106h1v3h-1zM838 102h1v4h-1zM839 100h1v2h-1zM840 99h1v1h-1zM842 98h1v1h-1zM843 97h1v1h-1zM844 96h1v4h-1zM844 101h1v9h-1zM845 110h1v40h-1zM846 150h1v75h-1zM847 225h1v14h-1zM848 239h1v44h-1zM849 283h1v41h-1zM850 324h1v8h-1zM851 332h1v8h-1zM852 340h1v8h-1zM853 348h1v8h-1zM854 356h1v5h-1zM855 358h1v2h-1zM856 357h1v1h-1zM857 355h1v2h-1zM858 353h1v2h-1zM859 325h1v28h-1zM860 269h1v56h-1zM861 215h1v54h-1zM862 164h1v51h-1zM863 121h1v43h-1zM864 102h1v19h-1zM865 102h1v1h-1zM866 102h1v1h-1zM867 102h1v1h-1zM868 102h1v12h-1zM869 114h1v38h-1zM870 152h1v54h-1zM871 207h1v52h-1zM872 281h1v31h-1zM873 355h1v11h-1zM875 392h1v1h-1zM876 392h1v1h-1zM877 392h1v1h-1zM878 392h1v1h-1zM879 387h1v6h-1zM880 377h1v10h-1zM881 367h1v10h-1zM882 356h1v11h-1zM883 346h1v10h-1zM884 320h1v26h-1zM885 279h1v41h-1zM886 237h1v42h-1zM887 196h1v41h-1zM888 100h1v96h-1zM889 99h1v1h-1zM890 98h1v1h-1zM891 97h1v1h-1zM893 95h1v1h-1zM894 94h1v1h-1z"/>
<path fill="#008000" shape-rendering="crispEdges" d="M294 94h1v1h-1zM295 94h1v1h-1zM296 93h1v1h-1zM297 93h1v1h-1zM298 92h1v1h-1zM299 92h1v1h-1zM300 92h1v1h-1zM301 92h1v1h-1zM302 92h1v1h-1zM303 92h1v1h-1zM304 92h1v1h-1zM305 93h1v1h-1zM306 93h1v1h-1zM307 94h1v1h-1zM308 94h1v1h-1zM309 95h1v1h-1zM310 96h1v1h-1zM311 97h1v1h-1zM312 98h1v1h-1zM313 99h1v1h-1zM314 100h1v1h-1zM315 99h1v1h-1zM316 98h1v1h-1zM317 97h1v1h-1zM318 96h1v1h-1zM319 95h1v1h-1zM320 94h1v1h-1zM321 93h1v1h-1zM322 92h1v1h-1zM323 91h1v1h-1zM324 90h1v1h-1zM325 91h1v1h-1zM326 92h1v1h-1zM327 93h1v1h-1zM328 94h1v1h-1zM329 95h1v1h-1zM330 96h1v1h-1zM331 96h1v1h-1zM332 96h1v1h-1zM333 97h1v1h-1zM334 97h1v1h-1zM335 97h1v1h-1zM336 97h1v1h-1zM337 97h1v1h-1zM338 97h1v1h-1zM339 96h1v1h-1zM340 95h1v1h-1zM341 94h1v1h-1zM342 94h1v1h-1zM343 93h1v1h-1zM344 92h1v1h-1zM345 93h1v1h-1zM346 93h1v1h-1zM347 94h1v1h-1zM348 94h1v1h-1zM349 95h1v1h-1zM350 95h1v1h-1zM351 96h1v1h-1zM352 96h1v1h-1zM353 97h1v1h-1zM354 97h1v1h-1zM355 97h1v1h-1zM356 97h1v1h-1zM357 97h1v1h-1zM358 97h1v1h-1zM359 97h1v1h-1zM360 96h1v1h-1zM361 95h1v1h-1zM362 95h1v1h-1zM363 94h1v1h-1zM364 93h1v1h-1zM365 92h1v1h-1zM366 92h1v1h-1zM367 91h1v1h-1zM368 90h1v1h-1zM369 91h1v1h-1zM370 92h1v1h-1zM371 92h1v1h-1zM372 93h1v1h-1zM373 94h1v1h-1zM374 95h1v1h-1zM375 95h1v1h-1zM376 96h1v1h-1zM377 97h1v1h-1zM378 98h1v1h-1zM379 98h1v1h-1zM380 99h1v1h-1zM381 98h1v1h-1zM382 98h1v1h-1zM383 97h1v1h-1zM384 97h1v1h-1zM385 96h1v1h-1zM386 96h1v1h-1zM387 95h1v1h-1zM388 95h1v1h-1zM389 94h1v1h-1zM390 94h1v1h-1zM391 93h1v1h-1zM392 93h1v1h-1zM393 92h1v1h-1zM394 92h1v1h-1zM395 93h1v1h-1zM396 93h1v1h-1zM397 94h1v1h-1zM398 94h1v1h-1zM399 95h1v1h-1zM400 96h1v1h-1zM401 97h1v1h-1zM402 98h1v1h-1zM403 99h1v1h-1zM404 100h1v1h-1zM405 100h1v1h-1zM406 100h1v1h-1zM407 100h1v1h-1zM408 100h1v1h-1zM409 100h1v1h-1zM410 99h1v1h-1zM411 98h1v1h-1zM412 97h1v1h-1zM413 96h1v1h-1zM414 95h1v1h-1zM415 94h1v1h-1zM416 93h1v1h-1zM417 92h1v1h-1zM418 91h1v1h-1zM419 90h1v1h-1zM420 91h1v1h-1zM421 91h1v1h-1zM422 92h1v1h-1zM423 92h1v1h-1zM424 93h1v1h-1zM425 93h1v1h-1zM426 94h1v1h-1zM427 95h1v1h-1zM428 96h1v1h-1zM429 97h1v1h-1zM430 98h1v1h-1zM431 99h1v1h-1zM432 100h1v1h-1zM433 101h1v1h-1zM434 102h1v1h-1zM435 101h1v1h-1zM436 100h1v1h-1zM437 99h1v1h-1zM438 98h1v1h-1zM439 97h1v1h-1zM440 96h1v1h-1zM441 96h1v1h-1zM442 95h1v1h-1zM443 95h1v1h-1zM444 94h1v1h-1zM445 94h1v1h-1zM446 93h1v1h-1zM447 93h1v1h-1zM448 92h1v1h-1zM449 92h1v1h-1zM450 93h1v1h-1zM451 94h1v1h-1zM452 95h1v1h-1zM453 96h1v1h-1zM454 97h1v1h-1zM455 97h1v1h-1zM456 97h1v1h-1zM457 97h1v1h-1zM458 97h1v1h-1zM459 97h1v1h-1zM460 97h1v1h-1zM461 96h1v1h-1zM462 96h1v1h-1zM463 95h1v1h-1zM464 95h1v1h-1zM465 94h1v1h-1zM466 94h1v1h-1zM467 93h1v1h-1zM468 93h1v1h-1zM469 92h1v1h-1zM470 92h1v1h-1zM471 93h1v1h-1zM472 93h1v1h-1zM473 94h1v1h-1zM474 94h1v1h-1zM475 95h1v1h-1zM476 96h1v1h-1zM477 97h1v2h-1zM478 99h1v1h-1zM479 100h1v1h-1zM480 100h1v1h-1zM481 99h1v1h-1zM482 99h1v1h-1zM483 98h1v1h-1zM484 98h1v1h-1zM485 97h1v1h-1zM486 96h1v1h-1zM487 95h1v1h-1zM488 94h1v1h-1zM489 93h1v1h-1zM490 92h1v1h-1zM491 92h1v1h-1zM492 92h1v1h-1zM493 92h1v1h-1zM494 92h1v1h-1zM495 93h1v1h-1zM496 94h1v1h-1zM497 95h1v1h-1zM498 96h1v1h-1zM499 97h1v1h-1zM500 97h1v1h-1zM501 96h1v1h-1zM502 96h1v1h-1zM503 95h1v1h-1zM504 95h1v1h-1zM505 95h1v1h-1zM506 95h1v1h-1zM507 95h1v1h-1zM508 95h1v1h-1zM509 95h1v1h-1zM510 94h1v1h-1zM511 93h1v1h-1zM512 92h1v1h-1zM513 91h1v1h-1zM514 90h1v1h-1zM515 90h1v1h-1zM516 90h1v1h-1zM517 90h1v1h-1zM518 90h1v1h-1zM519 90h1v1h-1zM520 90h1v1h-1zM521 91h1v1h-1zM522 92h1v1h-1zM523 93h1v1h-1zM524 94h1v1h-1zM525 95h1v2h-1zM526 97h1v1h-1zM527 98h1v1h-1zM528 99h1v1h-1zM529 100h1v1h-1zM530 100h1v1h-1zM531 100h1v1h-1zM532 100h1v1h-1zM533 100h1v1h-1zM534 100h1v1h-1zM535 100h1v1h-1zM536 99h1v1h-1zM537 98h1v1h-1zM538 97h1v1h-1zM539 96h1v1h-1zM540 96h1v1h-1zM541 95h1v1h-1zM542 94h1v1h-1zM543 93h1v1h-1zM544 92h1v1h-1zM545 92h1v1h-1zM546 92h1v1h-1zM547 92h1v1h-1zM548 92h1v1h-1zM549 92h1v1h-1zM550 93h1v1h-1zM551 94h1v1h-1zM552 95h1v1h-1zM553 96h1v1h-1zM554 97h1v1h-1zM555 97h1v1h-1zM556 97h1v1h-1zM557 97h1v1h-1zM558 97h1v1h-1zM559 97h1v19h-1zM560 116h1v52h-1zM561 168h1v64h-1zM562 232h1v64h-1zM563 296h1v64h-1zM564 360h1v33h-1zM565 325h1v53h-1zM566 249h1v76h-1zM567 173h1v76h-1zM568 129h1v44h-1zM569 92h1v37h-1zM570 92h1v1h-1zM571 91h1v1h-1zM572 91h1v1h-1zM573 90h1v1h-1zM574 90h1v1h-1zM575 90h1v1h-1zM576 90h1v1h-1zM577 91h1v1h-1zM578 91h1v1h-1zM579 92h1v1h-1zM580 92h1v1h-1zM581 93h1v1h-1zM582 94h1v1h-1zM583 94h1v1h-1zM584 95h1v1h-1zM585 95h1v1h-1zM586 96h1v1h-1zM587 96h1v1h-1zM588 97h1v1h-1zM589 97h1v1h-1zM590 97h1v1h-1zM591 97h1v1h-1zM592 97h1v1h-1zM593 97h1v1h-1zM594 97h1v1h-1zM595 97h1v1h-1zM596 96h1v1h-1zM597 96h1v1h-1zM598 95h1v1h-1zM599 95h1v1h-1zM600 94h1v1h-1zM601 94h1v1h-1zM602 93h1v1h-1zM603 93h1v1h-1zM604 92h1v1h-1zM605 93h1v1h-1zM606 93h1v1h-1zM607 94h1v1h-1zM608 94h1v1h-1zM609 95h1v1h-1zM610 95h1v1h-1zM611 96h1v1h-1zM612 96h1v1h-1zM613 97h1v1h-1zM614 97h1v1h-1zM615 96h1v1h-1zM616 96h1v1h-1zM617 95h1v1h-1zM618 94h1v1h-1zM619 93h1v1h-1zM620 93h1v1h-1zM621 92h1v1h-1zM622 91h1v1h-1zM623 91h1v1h-1zM624 90h1v1h-1zM625 91h1v1h-1zM626 92h1v1h-1zM627 93h1v1h-1zM628 94h1v1h-1zM629 95h1v1h-1zM630 96h1v1h-1zM631 97h1v1h-1zM632 98h1v1h-1zM633 99h1v1h-1zM634 100h1v1h-1zM635 99h1v1h-1zM636 98h1v1h-1zM637 97h1v1h-1zM638 96h1v1h-1zM639 95h1v1h-1zM640 94h1v1h-1zM641 93h1v1h-1zM642 93h1v1h-1zM643 92h1v1h-1zM644 92h1v1h-1zM645 93h1v1h-1zM646 94h1v1h-1zM647 95h1v1h-1zM648 96h1v1h-1zM649 97h1v1h-1zM650 97h1v1h-1zM651 96h1v1h-1zM652 96h1v1h-1zM653 95h1v1h-1zM654 95h1v1h-1zM655 95h1v1h-1zM656 95h1v1h-1zM657 95h1v1h-1zM658 95h1v1h-1zM659 95h1v1h-1zM660 94h1v1h-1zM661 94h1v1h-1zM662 93h1v1h-1zM663 93h1v1h-1zM664 92h1v1h-1zM665 92h1v1h-1zM666 92h1v1h-1zM667 92h1v1h-1zM668 92h1v1h-1zM669 92h1v1h-1zM670 93h1v1h-1zM671 94h1v1h-1zM672 95h1v1h-1zM673 96h1v1h-1zM674 97h1v1h-1zM675 97h1v1h-1zM676 97h1v1h-1zM677 97h1v1h-1zM678 97h1v1h-1zM679 97h1v1h-1zM680 96h1v1h-1zM681 95h1v1h-1zM682 94h1v1h-1zM683 93h1v1h-1zM684 92h1v60h-1zM685 152h1v54h-1zM686 206h1v53h-1zM687 259h1v53h-1zM688 312h1v54h-1zM689 366h1v27h-1zM690 392h1v1h-1zM691 392h1v1h-1zM692 392h1v1h-1zM693 392h1v1h-1zM694 367h1v26h-1zM695 315h1v52h-1zM696 264h1v51h-1zM697 212h1v52h-1zM698 161h1v51h-1zM699 97h1v64h-1zM700 96h1v1h-1zM701 95h1v1h-1zM702 94h1v1h-1zM703 93h1v1h-1zM704 92h1v1h-1zM705 92h1v1h-1zM706 92h1v1h-1zM707 92h1v1h-1zM708 92h1v1h-1zM709 92h1v1h-1zM710 93h1v1h-1zM711 93h1v1h-1zM712 94h1v1h-1zM713 94h1v1h-1zM714 95h1v1h-1zM715 96h1v1h-1zM716 96h1v1h-1zM717 97h1v1h-1zM718 97h1v1h-1zM719 97h1v1h-1zM720 97h1v1h-1zM721 97h1v1h-1zM722 97h1v1h-1zM723 97h1v1h-1zM724 97h1v1h-1zM725 96h1v1h-1zM726 95h1v1h-1zM727 94h1v1h-1zM728 93h1v1h-1zM729 92h1v1h-1zM730 93h1v1h-1zM731 93h1v1h-1zM732 94h1v1h-1zM733 94h1v1h-1zM734 95h1v1h-1zM735 95h1v1h-1zM736 95h1v1h-1zM737 95h1v1h-1zM738 95h1v1h-1zM739 95h1v1h-1zM740 94h1v1h-1zM741 94h1v1h-1zM742 93h1v1h-1zM743 93h1v1h-1zM744 92h1v1h-1zM745 93h1v1h-1zM746 93h1v1h-1zM747 94h1v1h-1zM748 94h1v1h-1zM749 95h1v1h-1zM750 95h1v1h-1zM751 95h1v1h-1zM752 95h1v1h-1zM753 95h1v1h-1zM754 95h1v1h-1zM755 95h1v1h-1zM756 94h1v1h-1zM757 94h1v1h-1zM758 93h1v1h-1zM759 93h1v1h-1zM760 92h1v1h-1zM761 92h1v1h-1zM762 92h1v1h-1zM763 92h1v1h-1zM764 92h1v1h-1zM765 93h1v1h-1zM766 94h1v1h-1zM767 95h1v1h-1zM768 95h1v1h-1zM769 96h1v1h-1zM770 97h1v1h-1zM771 96h1v1h-1zM772 95h1v1h-1zM773 95h1v1h-1zM774 94h1v1h-1zM775 95h1v1h-1zM776 95h1v1h-1zM777 96h1v1h-1zM778 96h1v1h-1zM779 97h1v1h-1zM780 96h1v1h-1zM781 96h1v1h-1zM782 95h1v1h-1zM783 95h1v1h-1zM784 94h1v1h-1zM785 94h1v1h-1zM786 93h1v1h-1zM787 93h1v1h-1zM788 92h1v1h-1zM789 92h1v1h-1zM790 93h1v1h-1zM791 94h1v1h-1zM792 94h1v1h-1zM793 95h1v1h-1zM794 96h1v1h-1zM795 97h1v1h-1zM796 98h1v1h-1zM797 98h1v1h-1zM798 99h1v1h-1zM799 100h1v1h-1zM800 99h1v1h-1zM801 98h1v1h-1zM802 98h1v1h-1zM803 97h1v1h-1zM804 96h1v1h-1zM805 95h1v1h-1zM806 94h1v1h-1zM807 94h1v1h-1zM808 93h1v1h-1zM809 92h1v1h-1zM810 92h1v1h-1zM811 93h1v1h-1zM812 93h1v1h-1zM813 94h1v1h-1zM814 94h1v1h-1zM815 95h1v1h-1zM816 96h1v1h-1zM817 97h1v2h-1zM818 99h1v1h-1zM819 100h1v1h-1zM820 99h1v1h-1zM821 98h1v1h-1zM822 97h1v1h-1zM823 96h1v1h-1zM824 95h1v1h-1zM825 94h1v1h-1zM826 93h1v1h-1zM827 92h1v1h-1zM828 91h1v1h-1zM829 90h1v1h-1zM830 91h1v1h-1zM831 91h1v1h-1zM832 92h1v1h-1zM833 93h1v1h-1zM834 94h1v1h-1zM835 94h1v1h-1zM836 95h1v1h-1zM837 96h1v1h-1zM838 96h1v1h-1zM839 97h1v1h-1zM840 98h1v1h-1zM841 98h1v1h-1zM842 99h1v1h-1zM843 99h1v1h-1zM844 100h1v1h-1zM845 100h1v1h-1zM846 99h1v1h-1zM847 99h1v1h-1zM848 98h1v1h-1zM849 98h1v1h-1zM850 97h1v1h-1zM851 96h1v1h-1zM852 95h1v1h-1zM853 94h1v1h-1zM854 93h1v1h-1zM855 92h1v1h-1zM856 92h1v1h-1zM857 91h1v1h-1zM858 91h1v1h-1zM859 91h1v1h-1zM860 91h1v1h-1zM861 90h1v1h-1zM862 90h1v1h-1zM863 91h1v1h-1zM864 91h1v1h-1zM865 92h1v1h-1zM866 93h1v1h-1zM867 94h1v1h-1zM868 94h1v1h-1zM869 95h1v1h-1zM870 95h1v38h-1zM871 133h1v74h-1zM872 207h1v74h-1zM873 281h1v74h-1zM874 355h1v38h-1zM875 326h1v51h-1zM876 256h1v70h-1zM877 186h1v70h-1zM878 122h1v64h-1zM879 92h1v30h-1zM880 92h1v1h-1zM881 91h1v1h-1zM882 91h1v1h-1zM883 90h1v1h-1zM884 90h1v1h-1zM885 91h1v1h-1zM886 91h1v1h-1zM887 92h1v1h-1zM888 93h1v1h-1zM889 94h1v1h-1zM890 94h1v1h-1zM891 95h1v1h-1zM892 96h1v1h-1zM893 96h1v1h-1zM894 97h1v1h-1z"/>
<defs><linearGradient id="sb" x1="0" y1="0" x2="0" y2="1"><stop offset="0" stop-color="#e6e6e6"/><stop offset="0.5" stop-color="#f0f0f0"/><stop offset="1" stop-color="#ececec"/></linearGradient></defs>
</svg>

<!-- controls row -->
<div class="a lbl" style="left:234px;top:444px">Wykresy</div>
<div class="a key" style="left:302px;top:439px;width:26px;height:27px"><span class="l1" style="font-size:14px;transform:scaleX(0.92)">G</span></div>
<div class="a combo" style="left:333px;top:439px;width:46px;height:24px"></div>
<div class="a lbl" style="left:337px;top:445px">1</div><svg class="a" style="left:367px;top:450px" width="8" height="5" viewBox="0 0 8 5"><path d="M0,0 H8 L4,4.5 Z" fill="#000"/></svg>
<div class="a lbl" style="left:388px;top:444px">Przesuw</div>
<div class="a key" style="left:457px;top:439px;width:26px;height:27px"><span class="l1" style="font-size:14px;transform:scaleX(0.92)">R</span></div>
<div class="a combo dis" style="left:488px;top:439px;width:105px;height:24px"></div>
<div class="a lbl" style="left:492px;top:445px;color:#8a8a8a">60/min</div><svg class="a" style="left:580px;top:450px" width="8" height="5" viewBox="0 0 8 5"><path d="M0,0 H8 L4,4.5 Z" fill="#a8a8a8"/></svg>
<div class="a lbl" style="left:603px;top:444px">Skala</div>
<div class="a key" style="left:649px;top:439px;width:26px;height:27px"><span class="l1" style="font-size:14px;transform:scaleX(0.92)">S</span></div>
<div class="a combo" style="left:680px;top:439px;width:72px;height:24px"></div>
<div class="a lbl" style="left:684px;top:445px">5x</div><svg class="a" style="left:740px;top:450px" width="8" height="5" viewBox="0 0 8 5"><path d="M0,0 H8 L4,4.5 Z" fill="#000"/></svg>
<div class="a key" style="left:765px;top:439px;width:26px;height:27px"><span class="l1" style="font-size:14px;transform:scaleX(0.92)">T</span></div>
<div class="a lbl" style="left:800px;top:444px">Tagi</div>

<!-- Plik group -->
<div class="a" style="left:228px;top:471px;width:323px;height:90px;border:1px solid #6e6e6e"></div>
<div class="a lbl" style="left:236px;top:482px;font-size:16px">Plik</div>
<div class="a combo dis" style="left:317px;top:475px;width:229px;height:27px"></div>
<div class="a lbl" style="left:321px;top:481px;font-size:16px;color:#777">File2</div><svg class="a" style="left:534px;top:487px" width="8" height="5" viewBox="0 0 8 5"><path d="M0,0 H8 L4,4.5 Z" fill="#a8a8a8"/></svg>
<div class="a btn" style="left:233px;top:513px;width:146px;height:44px"></div>
<div class="a key gray" style="left:246px;top:522px;width:26px;height:27px"><span class="l1" style="font-size:14px;transform:scaleX(0.92)">E</span></div>
<div class="a lbl" style="left:278px;top:526px;font-size:19.6px;color:#555">Eksport</div>
<div class="a btn" style="left:397px;top:513px;width:148px;height:44px"></div>
<div class="a key gray" style="left:414px;top:522px;width:26px;height:27px"><span class="l1" style="font-size:14px;transform:scaleX(0.92)">I</span></div>
<div class="a lbl" style="left:446px;top:526px;font-size:19.6px;color:#555">Import</div>

<!-- Recording group -->
<div class="a" style="left:557px;top:471px;width:446px;height:90px;border:1px solid #6e6e6e"></div>
<div class="a" style="left:561px;top:475px;width:438px;height:29px;border:1px solid #707070;background:#efefef"></div>
<div class="a lbl" style="left:561px;top:513px;font-size:16px;color:#008000">Recording ...</div>
<div class="a lbl" style="left:561px;top:537px;font-size:16px;color:#008000">124</div>
<div class="a" style="left:824px;top:513px;width:174px;height:44px;border:1px solid #3399d8;border-radius:3px;box-shadow:inset 0 0 0 1px #8fd0f4;background:linear-gradient(#f0f0f0 0%,#e8e8e8 45%,#dadada 47%,#cfcfcf 100%)"></div>
<div class="a key" style="left:851px;top:522px;width:26px;height:27px"><span style="font-size:14px;transform:scaleX(0.76)">F10</span></div>
<div class="a lbl" style="left:883px;top:526px;font-size:19px">Stop</div>

<!-- status bar -->
<div class="a" style="left:0;top:570px;width:1024px;height:30px;background:#f0edec;border-top:1px solid #a0a0a0"></div>
<div class="a" style="left:0;top:571px;width:375px;height:27px;background:#fdfdfd"></div>
<div class="a" style="left:34px;top:573px;width:1px;height:24px;background:#8a8a8a"></div>
<div class="a" style="left:374px;top:573px;width:1px;height:24px;background:#8a8a8a"></div>
<div class="a" style="left:41px;top:580px;font-size:11.6px;white-space:nowrap;line-height:1">ALFA 156 1.8 TS 16V / Bosch Motronic M1.5.5 Injection (TS '98)</div>
<div class="a" style="left:1022px;top:571px;width:2px;height:27px;background:#fdfdfd"></div>
<div class="a" style="left:0;top:598px;width:1024px;height:1px;background:#44546a"></div>
<div class="a" style="left:0;top:599px;width:1024px;height:1px;background:#b8d0e8"></div>

</body></html>
